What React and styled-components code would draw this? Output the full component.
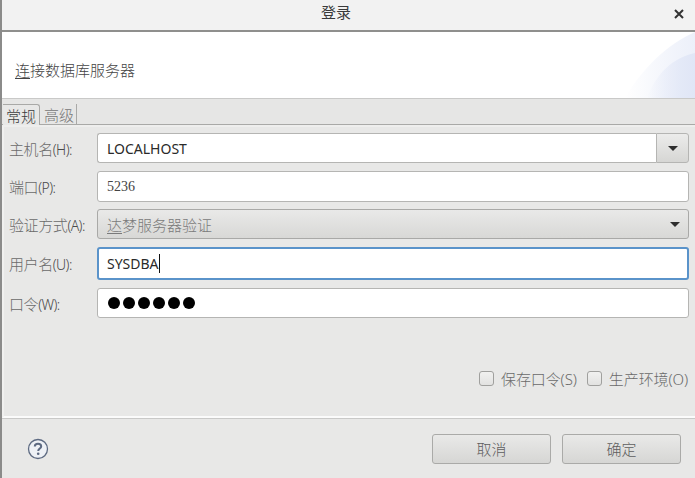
import styled, { createGlobalStyle } from "styled-components";

const GlobalStyle = createGlobalStyle`
  html, body {
    margin: 0;
    padding: 0;
    background: #e8e8e7;
  }
  * {
    box-sizing: border-box;
  }
`;

const FONT = `"Noto Sans", "Noto Sans CJK SC", sans-serif`;

const Window = styled.div`
  width: 695px;
  height: 478px;
  overflow: hidden;
  display: flex;
  flex-direction: column;
  border-left: 2px solid #8b8b8a;
  background: #e8e8e7;
  font-family: ${FONT};
`;

const TitleBar = styled.div`
  height: 32px;
  flex: none;
  display: flex;
  align-items: center;
  justify-content: center;
  position: relative;
  background: #f2f2f2;
  border-bottom: 2px solid #8f8f8d;
  color: #3a3a3a;
  font-size: 15px;
  padding: 0 25px 8px 0;
`;

const CloseIcon = styled.svg`
  position: absolute;
  right: 11px;
  top: 9px;
  width: 10px;
  height: 10px;
`;

const Banner = styled.div`
  height: 67px;
  flex: none;
  position: relative;
  display: flex;
  align-items: center;
  padding: 8px 0 0 13px;
  background: #fff;
  border-bottom: 1px solid #c9c9c8;
  color: #444;
  font-size: 15px;
  font-weight: 300;
`;

const BannerArt = styled.svg`
  position: absolute;
  right: 0;
  top: 0;
  width: 72px;
  height: 66px;
`;

const Mnemonic = styled.span`
  text-decoration: underline;
  text-underline-offset: 2px;
  text-decoration-thickness: 1px;
`;

const TabStrip = styled.div`
  height: 26px;
  flex: none;
  display: flex;
  align-items: flex-end;
  padding-left: 1px;
  background: #e6e6e5;
  border-bottom: 1px solid #a9a9a7;
`;

const Tab = styled.div`
  height: ${({ $active }) => ($active ? "21px" : "20px")};
  padding: 0 ${({ $active }) => ($active ? "3px" : "2px")} 0 ${({ $active }) => ($active ? "3px" : "4px")};
  display: flex;
  align-items: center;
  font-size: 15px;
  font-weight: 300;
  color: ${({ $active }) => ($active ? "#3c3c3c" : "#777")};
  background: ${({ $active }) => ($active ? "#e8e8e7" : "transparent")};
  border-right: 1px solid #a9a9a7;
  border-top: ${({ $active }) => ($active ? "1px solid #a9a9a7" : "none")};
  border-top-right-radius: ${({ $active }) => ($active ? "3px" : "0")};
  margin-bottom: ${({ $active }) => ($active ? "-1px" : "0")};
`;

const Panel = styled.div`
  flex: 1;
  padding: 6px 6px 0 5px;
  display: flex;
  flex-direction: column;
  background: #e8e8e7;
  border-top: 2px solid #eeeeed;
  border-left: 2px solid #f0f0ef;
  border-bottom: 2px solid #fbfbfb;
`;

const Row = styled.div`
  display: flex;
  align-items: center;
  margin-bottom: ${({ $gap }) => $gap || 8}px;
`;

const Label = styled.label`
  width: 88px;
  flex: none;
  font-size: 15px;
  font-weight: 300;
  color: #6a6a6a;
  letter-spacing: -0.4px;
  white-space: nowrap;
`;

const Key = styled.span`
  font-size: 14px;
  color: #4a4a4a;
  letter-spacing: -0.6px;
`;

const FieldBox = styled.div`
  flex: 1;
  height: ${({ $h }) => $h || 31}px;
  display: flex;
  align-items: center;
  padding-left: 9px;
  background: #fff;
  border: 1px solid #b5b5b3;
  border-radius: 3px;
  color: #2a2a2a;
  font-size: 14px;
`;

const SerifValue = styled.span`
  font-family: "Liberation Serif", serif;
  font-size: 14px;
  color: #444;
`;

const ComboBox = styled(FieldBox)`
  border-radius: 3px 0 0 3px;
  border-right: none;
`;

const ComboButton = styled.div`
  width: 33px;
  height: 30px;
  flex: none;
  display: flex;
  align-items: center;
  justify-content: center;
  background: linear-gradient(#ececeb, #d6d6d4);
  border: 1px solid #b5b5b3;
  border-radius: 0 3px 3px 0;
`;

const Caret = styled.span`
  width: 0;
  height: 0;
  border-left: 5px solid transparent;
  border-right: 5px solid transparent;
  border-top: 5px solid #2e2e2e;
`;

const SelectBox = styled.div`
  flex: 1;
  height: 30px;
  display: flex;
  align-items: center;
  justify-content: space-between;
  padding: 0 8px 0 9px;
  background: linear-gradient(#e9e9e8, #d8d8d6);
  border: 1px solid #a9a9a7;
  border-radius: 3px;
  color: #7a7a7a;
  font-size: 15px;
  font-weight: 300;
`;

const FocusBox = styled(FieldBox)`
  border: 2px solid #5a93ca;
  padding-left: 8px;
`;

const TextCursor = styled.span`
  width: 1px;
  height: 19px;
  background: #111;
`;

const Dots = styled.div`
  display: flex;
  gap: 3px;
  padding-left: 1px;
`;

const Dot = styled.span`
  width: 12px;
  height: 12px;
  border-radius: 50%;
  background: #000;
`;

const OptionRow = styled.div`
  margin-top: 42px;
  display: flex;
  justify-content: flex-end;
  align-items: center;
  gap: 10px;
  padding-right: 1px;
`;

const Option = styled.div`
  display: flex;
  align-items: center;
  gap: 7px;
  font-size: 15px;
  font-weight: 300;
  color: #6a6a6a;
  letter-spacing: -0.1px;
`;

const Check = styled.span`
  width: 15px;
  height: 15px;
  background: linear-gradient(#f1f1f0, #e2e2e1);
  border: 1px solid #a0a09e;
  border-radius: 3px;
`;

const Footer = styled.div`
  height: 60px;
  flex: none;
  display: flex;
  align-items: center;
  justify-content: space-between;
  padding: 0 14px 0 25px;
  background: #e8e8e7;
  border-top: 1px solid #c9c9c8;
`;

const Actions = styled.div`
  display: flex;
  gap: 11px;
`;

const Button = styled.button`
  width: 119px;
  height: 30px;
  padding: 0;
  background: linear-gradient(#e9e9e8, #d6d6d4);
  border: 1px solid #aaaaa8;
  border-radius: 3px;
  color: #5e5e5e;
  font-family: ${FONT};
  font-size: 15px;
  font-weight: 300;
`;

const App = () => {
  return (
    <>
      <GlobalStyle />
      <Window>
        <TitleBar>
          登录
          <CloseIcon viewBox="0 0 10 10">
            <path d="M1 1L9 9M9 1L1 9" stroke="#333" strokeWidth="2" />
          </CloseIcon>
        </TitleBar>
        <Banner>
          <span>
            <Mnemonic>连</Mnemonic>接数据库服务器
          </span>
          <BannerArt viewBox="0 0 72 66">
            <defs>
              <linearGradient id="fade" x1="0" x2="1" y1="0.7" y2="0.7">
                <stop offset="0" stopColor="#e0e6f6" stopOpacity="0" />
                <stop offset="0.7" stopColor="#e0e6f6" stopOpacity="0.75" />
                <stop offset="1" stopColor="#e0e6f6" />
              </linearGradient>
            </defs>
            <path d="M2 66C18 38 44 12 72 0V66Z" fill="url(#fade)" opacity="0.6" />
            <path d="M24 66C34 40 50 26 72 21V66Z" fill="url(#fade)" />
          </BannerArt>
        </Banner>
        <TabStrip>
          <Tab $active>常规</Tab>
          <Tab>高级</Tab>
        </TabStrip>
        <Panel>
          <Row>
            <Label>主机名<Key>(H):</Key></Label>
            <ComboBox $h={30}>LOCALHOST</ComboBox>
            <ComboButton>
              <Caret />
            </ComboButton>
          </Row>
          <Row $gap={7}>
            <Label>端口<Key>(P):</Key></Label>
            <FieldBox>
              <SerifValue>5236</SerifValue>
            </FieldBox>
          </Row>
          <Row>
            <Label>验证方式<Key>(A):</Key></Label>
            <SelectBox>
              <span>
                <Mnemonic>达</Mnemonic>梦服务器验证
              </span>
              <Caret />
            </SelectBox>
          </Row>
          <Row>
            <Label>用户名<Key>(U):</Key></Label>
            <FocusBox $h={33}>
              SYSDBA
              <TextCursor />
            </FocusBox>
          </Row>
          <Row>
            <Label>口令<Key>(W):</Key></Label>
            <FieldBox $h={30}>
              <Dots>
                {[0, 1, 2, 3, 4, 5].map((i) => (
                  <Dot key={i} />
                ))}
              </Dots>
            </FieldBox>
          </Row>
          <OptionRow>
            <Option>
              <Check />
              保存口令(S)
            </Option>
            <Option>
              <Check />
              生产环境(O)
            </Option>
          </OptionRow>
        </Panel>
        <Footer>
          <svg width="22" height="22" viewBox="0 0 22 22">
            <circle cx="11" cy="11" r="9.5" fill="#eef1f6" stroke="#5d6a82" strokeWidth="1.3" />
            <path d="M7.8 8.5C7.8 6.7 9.2 5.8 11 5.8C12.9 5.8 14.2 6.8 14.2 8.4C14.2 10.4 11.2 10.6 11.2 13" fill="none" stroke="#5d6a82" strokeWidth="2" />
            <circle cx="11.2" cy="15.8" r="1.3" fill="#5d6a82" />
          </svg>
          <Actions>
            <Button>取消</Button>
            <Button>确定</Button>
          </Actions>
        </Footer>
      </Window>
    </>
  );
};

export default App;
